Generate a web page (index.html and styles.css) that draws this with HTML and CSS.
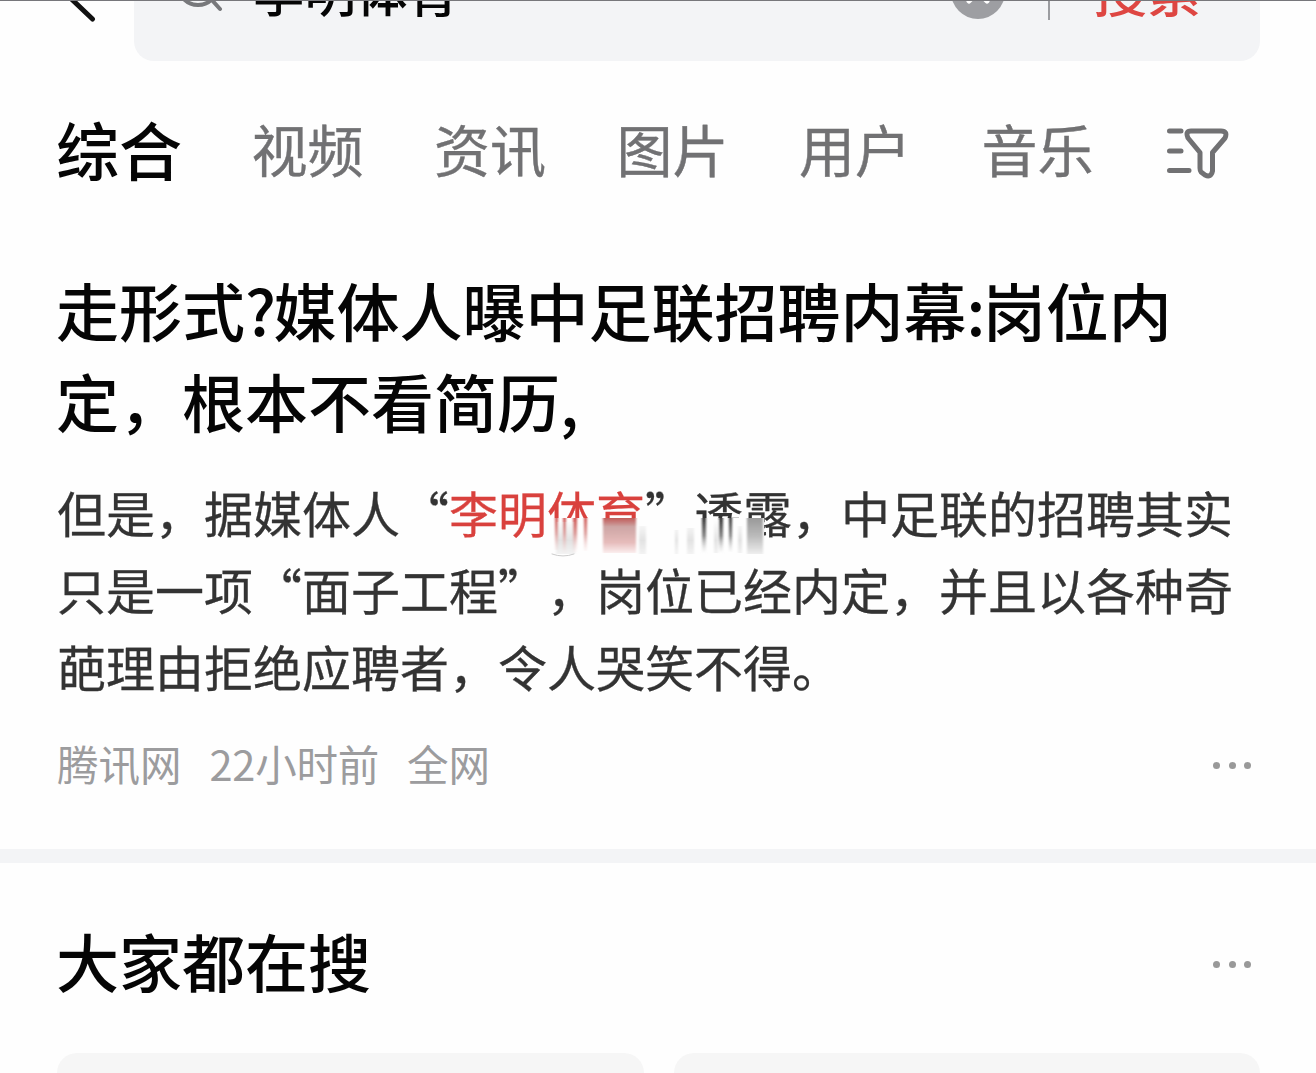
FILE: index.html
```
<!DOCTYPE html>
<html lang="zh-CN">
<head>
    <meta charset="UTF-8">
    <meta name="viewport" content="width=device-width, initial-scale=1.0">
    <title>李明体育 - 搜索</title>
    <link rel="stylesheet" href="styles.css">
</head>
<body>

<header class="header">
    <svg class="back" width="40" height="68" viewBox="0 0 40 68"><path d="M35 3L4 34L34.500 63"/></svg>
    <div class="search-box">
        <svg class="search-icon" width="48" height="54" viewBox="0 0 48 54"><circle cx="20" cy="22" r="20"/><path d="M33 36L42 46"/></svg>
        <span class="keyword">李明体育</span>
        <svg class="clear" width="54" height="54" viewBox="0 0 54 54"><circle cx="27" cy="27" r="27"/><path d="M18 18L36 36M36 18L18 36"/></svg>
        <span class="separator"></span>
        <span class="search-btn">搜索</span>
    </div>
</header>

<nav class="tabs">
    <span class="tab active">综合</span>
    <span class="tab">视频</span>
    <span class="tab">资讯</span>
    <span class="tab">图片</span>
    <span class="tab">用户</span>
    <span class="tab">音乐</span>
    <svg class="filter" width="64" height="54" viewBox="0 0 64 54"><path d="M4.500 6H16M4.500 26H16M4.500 45.500H24M26 6H56Q63 6 60 13L47.500 27.500V46Q46 53 40 50L36 47Q35 46 35 43V27.500L23 13Q20 6 26 6Z"/></svg>
</nav>

<article class="result">
    <h2 class="title">走形式<span class="punct">?</span>媒体人曝中足联招聘内幕<span class="punct">:</span>岗位内<br>定，根本不看简历,</h2>
    <div class="summary">
        但是，据媒体人“<em>李明体育</em>”透露，中足联的招聘其实<br>只是一项“面子工程”，岗位已经内定，并且以各种奇<br>葩理由拒绝应聘者，令人哭笑不得。
        <svg class="smear" width="222" height="46" viewBox="0 0 222 46">
            <defs>
                <linearGradient id="red" x2="0" y2="1"><stop offset="0" stop-color="#cf5552"/><stop offset=".45" stop-color="#dda09e"/><stop offset="1" stop-color="#f7dddd" stop-opacity="0"/></linearGradient>
                <linearGradient id="block" x2="0" y2="1"><stop offset="0" stop-color="#c05a58"/><stop offset=".25" stop-color="#cda5a4"/><stop offset=".7" stop-color="#e6bcbb"/><stop offset="1" stop-color="#fbeeee"/></linearGradient>
                <linearGradient id="gray" x2="0" y2="1"><stop offset="0" stop-color="#333"/><stop offset=".5" stop-color="#888"/><stop offset="1" stop-color="#ddd" stop-opacity="0"/></linearGradient>
                <linearGradient id="light" x2="0" y2="1"><stop offset="0" stop-color="#fefefe"/><stop offset=".6" stop-color="#e2e2e2"/><stop offset="1" stop-color="#f3f3f3"/></linearGradient>
                <linearGradient id="dark" x2="0" y2="1"><stop offset="0" stop-color="#999"/><stop offset=".5" stop-color="#bbb"/><stop offset="1" stop-color="#eee"/></linearGradient>
                <filter id="soft" x="-5%" width="110%"><feGaussianBlur stdDeviation="1.200 0.500"/></filter>
            </defs>
            <path fill="#fefefe" d="M0 0H216V42H0Z"/>
            <g filter="url(#soft)">
                <path fill="url(#light)" d="M8 4H27V36H8ZM91 8H98V36H91ZM127 12H130V36H127ZM139 10H146V36H139ZM166 2H170V35H166ZM190 8H194V35H190Z"/>
                <path fill="url(#dark)" d="M199 0H215V36H199Z"/>
                <path fill="url(#red)" d="M7 0H10V32H7ZM15 0H18V35H15ZM25 0H29V36H25ZM36 0H39V33H36Z"/>
                <path fill="url(#block)" d="M55 0H88V35H55Z"/>
                <path fill="url(#gray)" d="M154 0H158V36H154ZM171 0H175V36H171ZM181 0H184V34H181Z"/>
            </g>
            <path stroke="#ccc" stroke-width="1" d="M4 36Q15 40 26 36"/>
        </svg>
    </div>
    <footer class="meta">
        <span>腾讯网</span>
        <span class="time">22小时前</span>
        <span>全网</span>
        <span class="more"><i></i><i></i><i></i></span>
    </footer>
</article>

<section class="related">
    <div class="related-head">
        <h2>大家都在搜</h2>
        <span class="more"><i></i><i></i><i></i></span>
    </div>
    <div class="cards">
        <div class="card"></div>
        <div class="card"></div>
    </div>
</section>

</body>
</html>
```
FILE: styles.css
```
* {
    box-sizing: border-box;
}

body {
    margin: 0;
    height: 1073px;
    overflow: hidden;
    border-top: 1px solid #77777b;
    background: #fefefe;
    color: #050505;
    font-family: "Noto Sans CJK SC", sans-serif;
    text-spacing-trim: space-all;
}

svg {
    fill: none;
    stroke-linecap: round;
    stroke-linejoin: round;
    flex: none;
}

/* search bar is scrolled partly out of the top */
.header {
    display: flex;
    align-items: center;
    height: 142px;
    margin-top: -82px;
    padding: 0 56px 0 58px;
}

.back {
    stroke: #111;
    stroke-width: 5;
    margin-right: 36px;
}

.search-box {
    flex: 1;
    display: flex;
    align-items: center;
    height: 142px;
    padding: 0 59px 0 44px;
    border-radius: 20px;
    background: #f3f4f6;
}

.search-icon {
    stroke: #77787b;
    stroke-width: 4;
    margin-right: 27px;
}

.keyword {
    font-size: 51.5px;
    line-height: 70px;
    font-weight: 500;
}

.clear {
    margin: 3px 0 0 auto;
    stroke: #fff;
    stroke-width: 5;
}

.clear circle {
    fill: #9d9ea2;
    stroke: none;
}

.separator {
    width: 2px;
    height: 60px;
    margin: 0 43px 0 43px;
    background: #9b9ca0;
}

.search-btn {
    font-size: 54px;
    line-height: 70px;
    font-weight: 500;
    color: #de4642;
}

.tabs {
    display: flex;
    align-items: center;
    gap: 70.5px;
    height: 90px;
    margin-top: 42px;
    padding: 0 55px 0 56px;
}

.tab {
    font-size: 56px;
    line-height: 90px;
    color: #717173;
    -webkit-text-stroke: 0.4px currentColor;
}

.tab.active {
    font-size: 63px;
    font-weight: 500;
    color: #050505;
    margin-right: -1px;
    -webkit-text-stroke: 0;
}

.filter {
    stroke: #717173;
    stroke-width: 5;
    margin: 7px 0 0 1px;
}

.result {
    padding: 70px 57px 0;
    height: 670px;
    border-bottom: 14px solid #f3f4f6;
}

.title,
.related-head h2 {
    margin: 0 0 0 -1px;
    font-size: 63px;
    line-height: 91px;
    font-weight: 500;
    white-space: nowrap;
}

.punct {
    margin-right: -2.5px;
}

.summary {
    position: relative;
    margin-top: 28px;
    font-size: 49px;
    line-height: 77px;
    color: #333;
    white-space: nowrap;
    -webkit-text-stroke: 0.3px currentColor;
}

.summary em {
    font-style: normal;
    color: #d9413d;
}

/* smudged strip over the first line */
.smear {
    position: absolute;
    left: 491px;
    top: 45px;
}

.meta {
    display: flex;
    align-items: center;
    gap: 28px;
    height: 50px;
    margin-top: 34px;
    font-size: 41.5px;
    line-height: 50px;
    color: #9c9c9e;
}

.time {
    letter-spacing: -0.2px;
}

.more {
    display: flex;
    gap: 8.5px;
    margin-left: auto;
    padding: 4px 8px 0 0;
}

.more i {
    width: 7px;
    height: 7px;
    border-radius: 50%;
    background: #999;
}

.related {
    padding: 51px 57px 0;
}

.related-head {
    display: flex;
    align-items: center;
}

.related-head .more {
    padding-top: 9px;
}

.cards {
    display: grid;
    grid-template-columns: 1fr 1fr;
    gap: 30px;
    margin: 48px -1px 0 0;
}

.card {
    height: 20px;
    border-radius: 20px 20px 0 0;
    background: #f6f6f6;
}
```
